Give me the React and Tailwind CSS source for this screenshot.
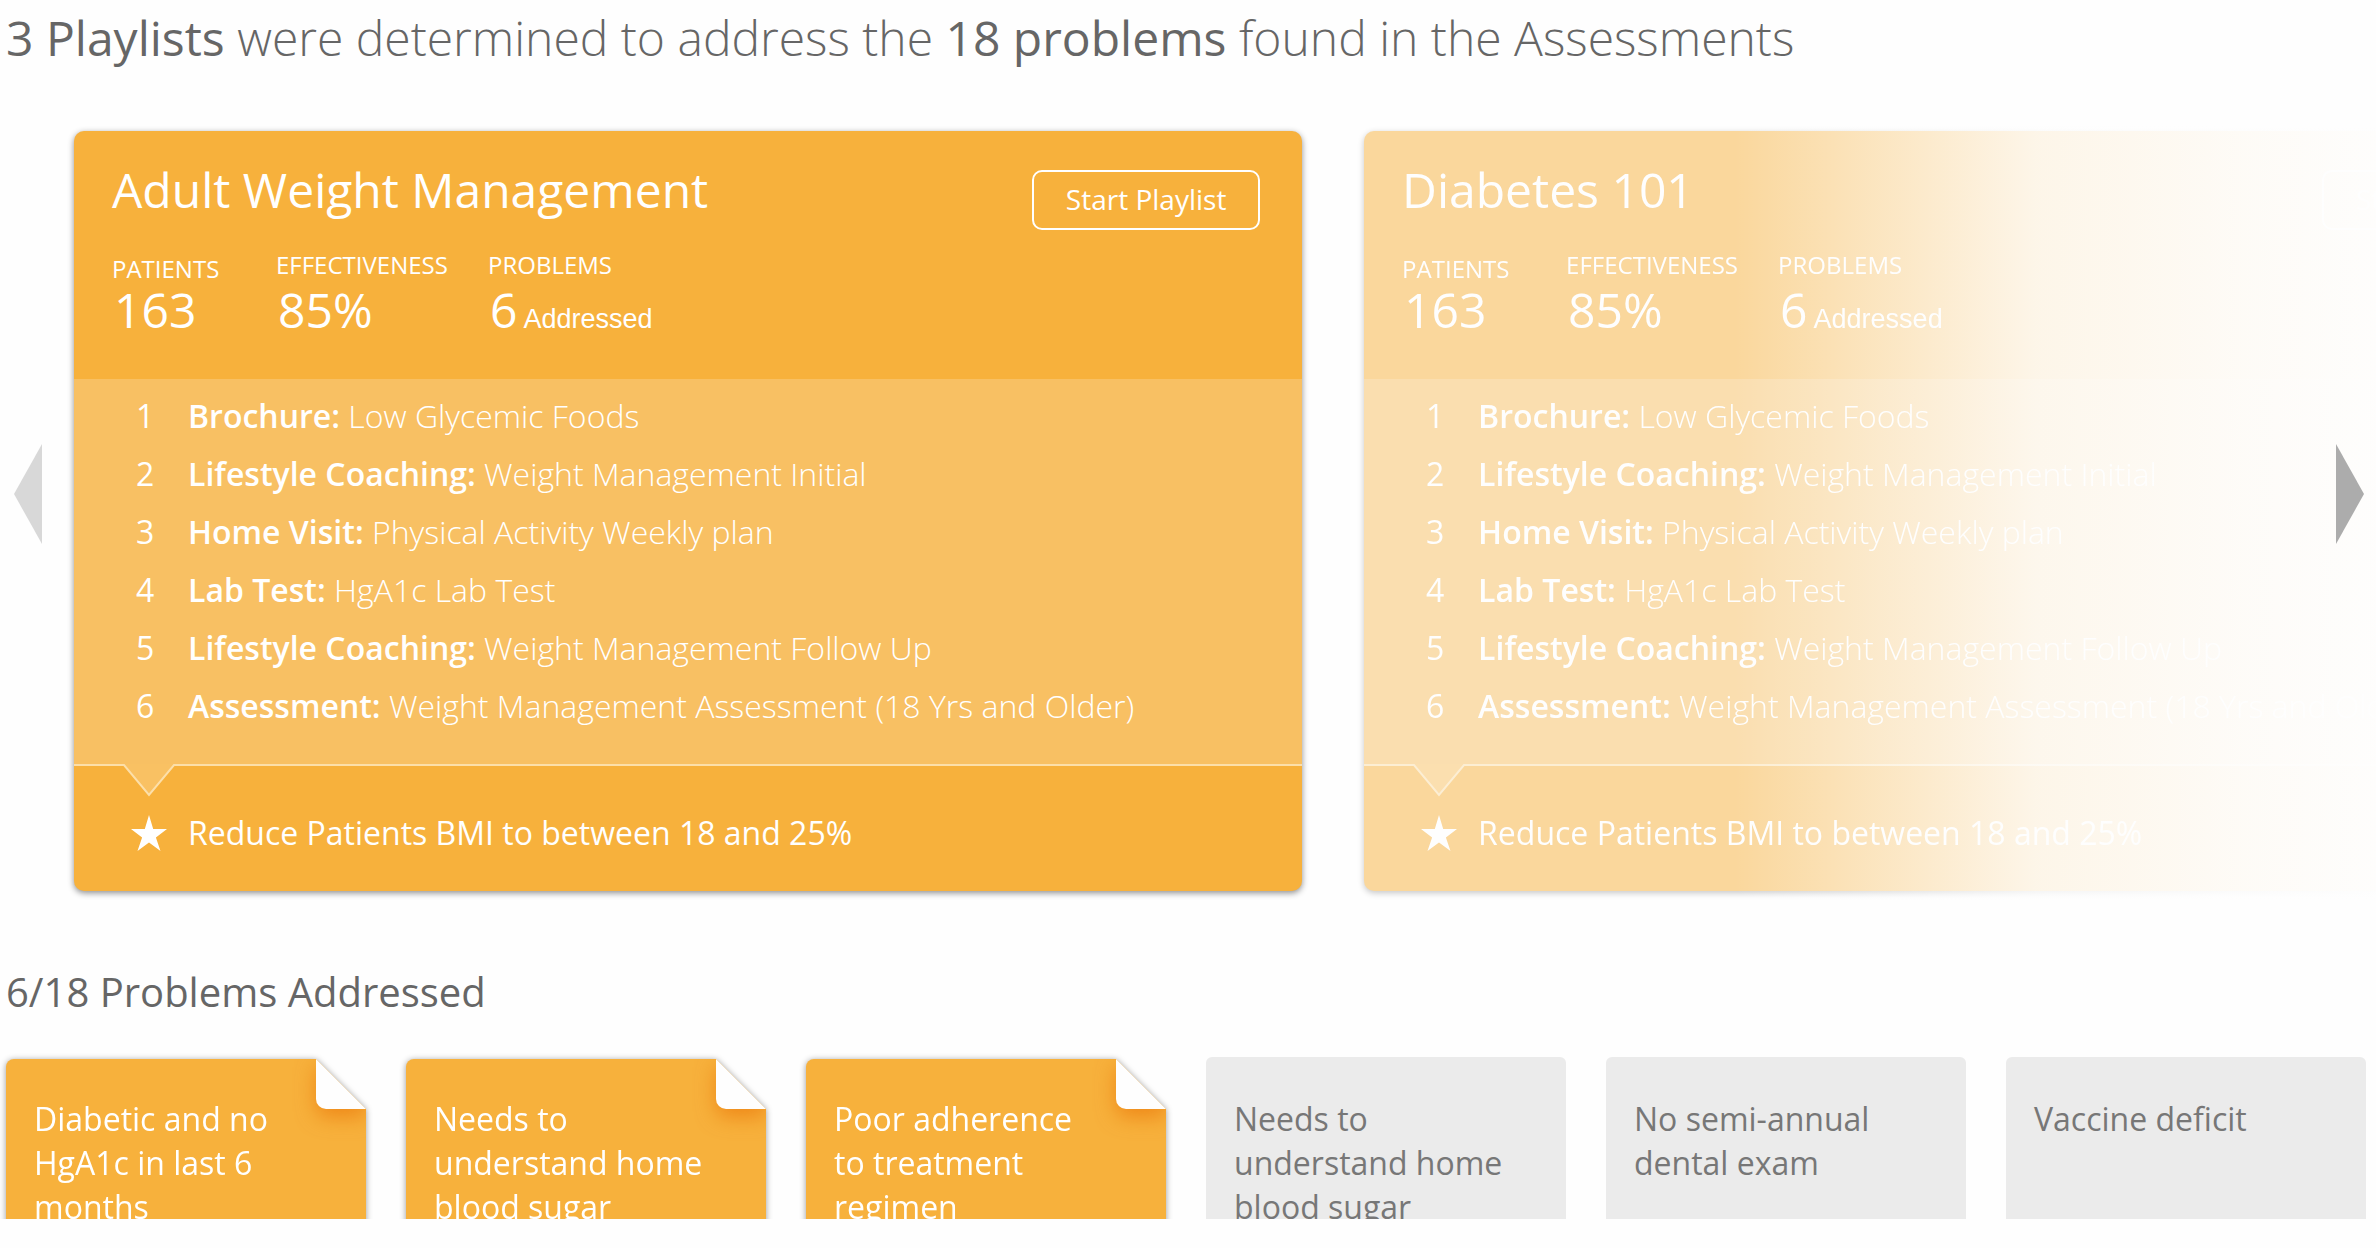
const STEPS = [
  ["Brochure:", "Low Glycemic Foods"],
  ["Lifestyle Coaching:", "Weight Management Initial"],
  ["Home Visit:", "Physical Activity Weekly plan"],
  ["Lab Test:", "HgA1c Lab Test"],
  ["Lifestyle Coaching:", "Weight Management Follow Up"],
  ["Assessment:", "Weight Management Assessment (18 Yrs and Older)"],
];

const PROBLEMS = [
  { text: "Diabetic and no HgA1c in last 6 months", addressed: true },
  { text: "Needs to understand home blood sugar", addressed: true },
  { text: "Poor adherence to treatment regimen", addressed: true },
  { text: "Needs to understand home blood sugar", addressed: false },
  { text: "No semi-annual dental exam", addressed: false },
  { text: "Vaccine deficit", addressed: false },
];

function PlaylistCard({ title, faded }) {
  return (
    <article
      className={
        "flex w-[53.35%] shrink-0 flex-col overflow-hidden rounded-[10px] bg-[#f7b13c] text-white shadow-[0_2px_6px_rgba(0,0,0,0.45)] " +
        (faded ? "opacity-50" : "")
      }
    >
      <header className="h-[248px] pl-[38px] pr-[42px] pt-[27px]">
        <div className="flex items-start justify-between">
          <h2 className="text-[48px] leading-[64px]">{title}</h2>
          <button
            type="button"
            className="mt-3 h-[60px] w-[228px] rounded-[10px] border-2 border-white pb-0.5 text-[28px] leading-[38px]"
          >
            Start Playlist
          </button>
        </div>
        <dl className="mt-[19px] flex">
          <div className="w-[164px] pt-1">
            <dt className="text-[24px] leading-8">PATIENTS</dt>
            <dd className="pl-0.5 text-[48px] leading-[50px]">163</dd>
          </div>
          <div className="w-[212px]">
            <dt className="text-[24px] leading-8">EFFECTIVENESS</dt>
            <dd className="pl-0.5 pt-1 text-[48px] leading-[50px]">85%</dd>
          </div>
          <div>
            <dt className="text-[24px] leading-8">PROBLEMS</dt>
            <dd className="pl-0.5 pt-1 text-[48px] leading-[50px]">
              6
              <span className="ml-1.5 font-['Liberation_Sans',sans-serif] text-[27px]">Addressed</span>
            </dd>
          </div>
        </dl>
      </header>
      <ol className="h-[385px] bg-white/20 pt-2">
        {STEPS.map(([kind, name], i) => (
          <li key={i} className="flex pl-[62px] text-[32px] leading-[58px]">
            <span className="w-[52px] shrink-0">{i + 1}</span>
            <span className="whitespace-nowrap font-[350]">
              <strong className="font-[650]">{kind}</strong> {name}
            </span>
          </li>
        ))}
      </ol>
      <footer className="relative flex h-[127px] items-center border-t-2 border-[#fcdfa9] pl-[57px] pt-2">
        <svg className="absolute -top-0.5 left-12" width="54" height="34" viewBox="0 0 54 34" aria-hidden="true">
          <path d="M0 0H54V2H52L27 31L2 2H0Z" fill="#f9c163" />
          <path d="M0 1H2L27 31L52 1H54" fill="none" stroke="#fcdfa9" strokeWidth="2" />
        </svg>
        <svg width="36" height="36" viewBox="0 0 36 36" fill="currentColor" aria-hidden="true">
          <path d="M18 0L22.2 14H36L24.900 22.500L29.500 36L18 27.600L6.500 36L11.100 22.500L0 14H13.800Z" />
        </svg>
        <p className="ml-[21px] text-[32px] leading-[44px]">Reduce Patients BMI to between 18 and 25%</p>
      </footer>
    </article>
  );
}

function ProblemCard({ text, addressed }) {
  if (!addressed) {
    return (
      <li className="h-[240px] rounded-[6px] bg-[#ebebeb] pl-7 pr-[60px] pt-10 text-[32px] leading-[44px] text-[#777]">
        {text}
      </li>
    );
  }
  return (
    <li className="relative mt-0.5 h-[240px] text-[32px] leading-[44px] text-white drop-shadow-[0_1px_3px_rgba(0,0,0,0.4)]">
      <div className="h-full overflow-hidden rounded-[8px] bg-[#f7b13c] pl-7 pr-[60px] pt-[38px] [clip-path:polygon(0_0,calc(100%-50px)_0,100%_50px,100%_100%,0_100%)]">
        <span className="absolute right-0 top-0 size-[50px] rounded-bl-[10px] bg-[#fefefe] shadow-[0_8px_20px_rgba(235,120,10,0.7)]" />
        <span className="relative">{text}</span>
      </div>
    </li>
  );
}

export default function App() {
  return (
    <main className="min-h-screen overflow-hidden bg-[#fefefe] font-['Open_Sans',sans-serif] text-[#666]">
      <h1 className="pl-1.5 pt-[5px] text-[48px] font-light leading-[66px]">
        <b className="font-medium">3 Playlists</b> were determined to address the{" "}
        <b className="font-medium">18 problems</b> found in the Assessments
      </h1>

      <section aria-label="Playlists" className="relative mt-11">
        <div className="flex gap-[62px] overflow-hidden pb-4 pl-[74px] pt-4">
          <PlaylistCard title="Adult Weight Management" />
          <PlaylistCard title="Diabetes 101" faded />
        </div>
        <div className="pointer-events-none absolute inset-y-0 right-0 w-[27%] bg-[linear-gradient(to_right,rgba(254,254,254,0),rgba(254,254,254,0.78)_47%,rgba(254,254,254,0.92)_79%,rgba(254,254,254,0.98))]" />
        <button type="button" aria-label="Previous playlist" className="absolute left-3.5 top-[329px] text-[#d8d8d8]">
          <svg className="block" width="28" height="100" viewBox="0 0 28 100" fill="currentColor" aria-hidden="true">
            <path d="M28 0V100L0 50Z" />
          </svg>
        </button>
        <button type="button" aria-label="Next playlist" className="absolute right-3 top-[329px] text-[#acacac]">
          <svg className="block" width="28" height="100" viewBox="0 0 28 100" fill="currentColor" aria-hidden="true">
            <path d="M0 0V100L28 50Z" />
          </svg>
        </button>
      </section>

      <section className="mt-[58px]">
        <h2 className="pl-1.5 text-[40px] leading-[54px]">6/18 Problems Addressed</h2>
        <ul className="grid h-[200px] grid-cols-6 gap-10 overflow-hidden pl-1.5 pr-2.5 pt-[38px]">
          {PROBLEMS.map((p, i) => (
            <ProblemCard key={i} {...p} />
          ))}
        </ul>
      </section>
    </main>
  );
}
